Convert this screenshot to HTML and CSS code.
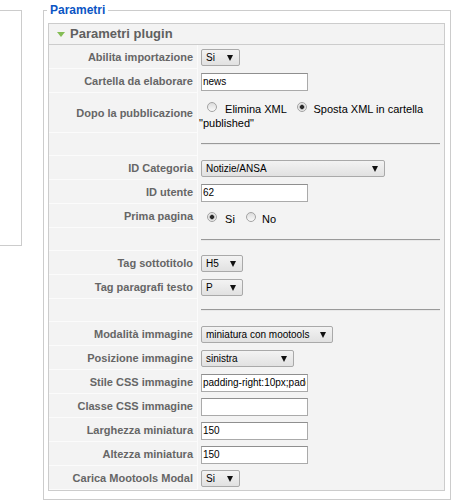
FILE: index.html
```html
<!DOCTYPE html>
<html lang="it">
<head>
<meta charset="utf-8">
<title>Parametri plugin</title>
<link rel="stylesheet" href="styles.css">
</head>
<body>
<div class="page">
  <div class="sidebar"></div>
  <fieldset class="params">
    <legend>Parametri</legend>
    <div class="pane">
      <div class="pane-title"><span class="toggle"></span>Parametri plugin</div>
      <div class="paramlist">
        <div class="row"><div class="key">Abilita importazione</div><div class="val"><span class="select w-si">Si<i class="arrow"></i></span></div></div>
        <div class="row"><div class="key">Cartella da elaborare</div><div class="val"><input class="text" type="text" value="news"></div></div>
        <div class="row tall"><div class="key">Dopo la pubblicazione</div><div class="val choice choice-tall"><span class="radio"></span> <span class="opt">Elimina XML</span> <span class="radio checked"></span> <span class="opt">Sposta XML in cartella</span> <span class="opt">"published"</span></div></div>
        <div class="row sep"><div class="key"></div><div class="val rule-cell"><div class="rule"></div></div></div>
        <div class="row"><div class="key">ID Categoria</div><div class="val"><span class="select w-cat">Notizie/ANSA<i class="arrow"></i></span></div></div>
        <div class="row"><div class="key">ID utente</div><div class="val"><input class="text" type="text" value="62"></div></div>
        <div class="row"><div class="key">Prima pagina</div><div class="val choice"><span class="radio checked"></span> <span class="opt">Si</span> <span class="radio"></span> <span class="opt">No</span></div></div>
        <div class="row sep"><div class="key"></div><div class="val rule-cell"><div class="rule rule-low"></div></div></div>
        <div class="row"><div class="key">Tag sottotitolo</div><div class="val"><span class="select w-tag">H5<i class="arrow"></i></span></div></div>
        <div class="row"><div class="key">Tag paragrafi testo</div><div class="val"><span class="select w-tag">P<i class="arrow"></i></span></div></div>
        <div class="row sep"><div class="key"></div><div class="val rule-cell"><div class="rule"></div></div></div>
        <div class="row"><div class="key">Modalità immagine</div><div class="val"><span class="select w-mode">miniatura con mootools<i class="arrow"></i></span></div></div>
        <div class="row"><div class="key">Posizione immagine</div><div class="val"><span class="select w-pos">sinistra<i class="arrow"></i></span></div></div>
        <div class="row"><div class="key">Stile CSS immagine</div><div class="val"><input class="text" type="text" value="padding-right:10px;padding-bottom:10px;"></div></div>
        <div class="row"><div class="key">Classe CSS immagine</div><div class="val"><input class="text" type="text" value=""></div></div>
        <div class="row"><div class="key">Larghezza miniatura</div><div class="val"><input class="text" type="text" value="150"></div></div>
        <div class="row"><div class="key">Altezza miniatura</div><div class="val"><input class="text" type="text" value="150"></div></div>
        <div class="row"><div class="key">Carica Mootools Modal</div><div class="val"><span class="select w-si">Si<i class="arrow"></i></span></div></div>
      </div>
    </div>
  </fieldset>
</div>
</body>
</html>
```

FILE: styles.css
```css
* {
  box-sizing: border-box;
}

html,
body {
  margin: 0;
  padding: 0;
  background: #fff;
}

body {
  font-family: "Liberation Sans", Arial, sans-serif;
  font-size: 11px;
  color: #000;
}

.page {
  display: flex;
  align-items: flex-start;
}

.sidebar {
  flex: none;
  width: 22px;
  height: 236px;
  margin-top: 10px;
  border: 1px solid #ccc;
  border-left: 0;
}

.params {
  flex: none;
  width: 408px;
  min-width: 0;
  margin: 3px 0 0 21px;
  padding: 5px 5px 8px 4px;
  border: 1px solid #ccc;
}

.params legend {
  margin-left: -1px;
  padding: 0 3px;
  font-size: 12px;
  line-height: 15px;
  font-weight: bold;
  color: #0b55c4;
}

.pane {
  border: 1px solid #ccc;
  background: #f3f3f3;
}

.pane-title {
  display: flex;
  align-items: center;
  height: 21px;
  padding-left: 8px;
  border-bottom: 1px solid #ccc;
  font-size: 13px;
  line-height: 20px;
  font-weight: bold;
  color: #606060;
}

.toggle {
  width: 0;
  height: 0;
  margin-right: 5px;
  border-left: 4.5px solid transparent;
  border-right: 4.5px solid transparent;
  border-top: 5px solid #84bd55;
}

.row {
  display: grid;
  grid-template-columns: 149px 1fr;
  height: 24px;
}

.row.tall {
  height: 40px;
}

.row.sep {
  height: 23px;
}

.key {
  display: flex;
  align-items: center;
  justify-content: flex-end;
  padding: 2px 4px 0 0;
  border-right: 1px solid #fbfbfb;
  border-bottom: 1px solid #fbfbfb;
  font-weight: bold;
  color: #666;
  line-height: 13px;
  white-space: nowrap;
}

.val {
  display: flex;
  align-items: center;
  padding: 1px 0 0 1px;
  min-width: 0;
}

.val.choice {
  display: block;
  padding-top: 8px;
  line-height: 14px;
}

.val.choice-tall {
  padding-top: 9px;
}

.val.rule-cell {
  display: block;
  padding: 10px 4px 0 3px;
}

.rule {
  height: 2px;
  border-top: 1px solid #999;
  border-bottom: 1px solid #e8e8e8;
}

.rule.rule-low {
  margin-top: 1px;
}

.select {
  display: inline-flex;
  align-items: center;
  justify-content: space-between;
  height: 17px;
  margin-left: 2px;
  padding: 0 6px 0 4px;
  border: 1px solid #a9a9a9;
  border-radius: 2px;
  background: linear-gradient(#f3f3f3, #e1e1e1);
  font-size: 10px;
  line-height: 15px;
  white-space: nowrap;
  color: #000;
}

.arrow {
  flex: none;
  width: 0;
  height: 0;
  margin-left: 6px;
  border-left: 3.5px solid transparent;
  border-right: 3.5px solid transparent;
  border-top: 6px solid #111;
}

.w-si {
  width: 39px;
}

.w-tag {
  width: 42px;
}

.w-cat {
  width: 184px;
}

.w-mode {
  width: 132px;
}

.w-pos {
  width: 93px;
}

.text {
  width: 107px;
  height: 18px;
  margin: 0 0 0 2px;
  padding: 0 1px;
  border: 1px solid #aaa;
  border-top-color: #8f8f8f;
  border-radius: 0;
  background: #fff;
  font-family: "Liberation Sans", Arial, sans-serif;
  font-size: 10px;
  color: #000;
  outline: none;
}

.radio {
  display: inline-block;
  width: 10px;
  height: 10px;
  margin: 0 3px 0 8px;
  border: 1px solid #a3a3a3;
  border-radius: 50%;
  background: linear-gradient(#dcdcdc, #fafafa);
  vertical-align: 1px;
}

.radio:first-child {
  margin-right: 5px;
}

.radio.checked {
  background: radial-gradient(circle at 50% 50%, #2a2a2a 0 1.6px, #9a9a9a 2.2px, #e4e4e4 3px, #f7f7f7 100%);
}
```
